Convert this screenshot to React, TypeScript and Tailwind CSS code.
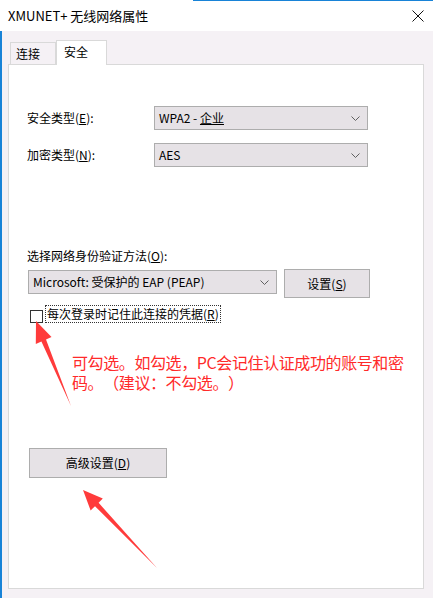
import React from "react";

const font = { fontFamily: '"Noto Sans CJK SC", "Noto Sans", sans-serif' };

function Chevron() {
  return (
    <svg width="9" height="5" viewBox="0 0 9 5" className="shrink-0">
      <path d="M0.5 0.5 L4.5 4.5 L8.5 0.5" fill="none" stroke="#606060" strokeWidth="1" />
    </svg>
  );
}

function Select({ children, className }: { children: React.ReactNode; className: string }) {
  return (
    <div
      className={
        "h-[24px] bg-[#e6e2e6] border border-[#adadad] flex items-center justify-between pl-[4px] pr-[7px] text-[12px] text-black leading-none " +
        className
      }
    >
      <span>{children}</span>
      <Chevron />
    </div>
  );
}

function Arrow({ points }: { points: string }) {
  return <polygon points={points} fill="#ff3b3b" />;
}

export default function App() {
  return (
    <div
      className="relative w-[433px] h-[598px] bg-[#f5f1f5] flex flex-col overflow-hidden text-black"
      style={font}
    >
      {/* title bar */}
      <div className="h-[31px] bg-white flex items-center justify-between pl-[8px] pr-[9px] shrink-0">
        <span className="text-[13px] leading-none">XMUNET+ 无线网络属性</span>
        <svg width="12" height="12" viewBox="0 0 12 12">
          <path d="M0.5 0.5 L11.5 11.5 M11.5 0.5 L0.5 11.5" stroke="#111" strokeWidth="1" />
        </svg>
      </div>

      {/* body */}
      <div className="flex-1 flex flex-col border-l-2 border-l-[#1883d7] pl-[6px] pr-[9px] pt-[9px] pb-[9px]">
        {/* tabs */}
        <div className="flex items-end ml-[2px] h-[24px] text-[12px] leading-none">
          <div className="w-[46px] h-[22px] border border-b-0 border-[#d9d9d9] bg-[#f5f1f5] flex items-center pl-[5px]">
            连接
          </div>
          <div className="w-[51px] h-[25px] -mb-px border border-b-0 border-[#d9d9d9] bg-white flex items-center pl-[7px] pb-[3px] relative z-10">
            安全
          </div>
        </div>

        {/* panel */}
        <div className="flex-1 border border-[#d9d9d9] bg-white flex flex-col pl-[18px] text-[12px] leading-none">
          <div className="mt-[41px] flex items-center">
            <div className="w-[127px]">
              安全类型(<span className="underline">E</span>):
            </div>
            <Select className="w-[214px]">
              WPA2 - <span className="underline">企业</span>
            </Select>
          </div>
          <div className="mt-[13px] flex items-center">
            <div className="w-[127px]">
              加密类型(<span className="underline">N</span>):
            </div>
            <Select className="w-[214px]">AES</Select>
          </div>

          <div className="mt-[82px] h-[14px] flex items-center">
            选择网络身份验证方法(<span className="underline">O</span>):
          </div>

          <div className="mt-[6px] flex items-start">
            <Select className="w-[249px] mt-[1px] ml-[1px]">Microsoft: 受保护的 EAP (PEAP)</Select>
            <div className="ml-[7px] w-[86px] h-[29px] bg-[#e6e2e6] border border-[#adadad] flex items-center justify-center">
              设置(<span className="underline">S</span>)
            </div>
          </div>

          <div className="mt-[7px] flex items-center ml-[3px]">
            <div className="w-[13px] h-[13px] border border-[#333] bg-white mt-[4px]" />
            <div className="ml-[2px] h-[18px] border border-dotted border-[#333] flex items-center pl-px pr-[1px]">
              每次登录时记住此连接的凭据(<span className="underline">R</span>)
            </div>
          </div>

          <div className="mt-[31px] ml-[45px] flex flex-col gap-[4px] text-[16px] leading-none text-[#ff2a2a] whitespace-nowrap tracking-[-0.4px] [text-spacing-trim:space-all]">
            <div className="h-[16px]">可勾选。如勾选，PC会记住认证成功的账号和密</div>
            <div className="h-[16px]">码。（建议：不勾选。）</div>
          </div>

          <div className="mt-[58px] ml-[2px] w-[138px] h-[30px] bg-[#e6e2e6] border border-[#adadad] flex items-center justify-center">
            高级设置(<span className="underline">D</span>)
          </div>
        </div>
      </div>

      {/* top blue line segment */}
      <div className="absolute top-0 right-0 w-[240px] h-px bg-[#1883d7]" />

      {/* annotation arrows */}
      <svg className="absolute left-0 top-0 pointer-events-none" width="433" height="598">
        <Arrow points="36,321 51.5,337 46,339.5 71,406 41.4,341.5 35.8,344" />
        <Arrow points="83,490 102.8,498.6 98.6,502.8 157,568 95,506.2 90.6,510.4" />
      </svg>
    </div>
  );
}
